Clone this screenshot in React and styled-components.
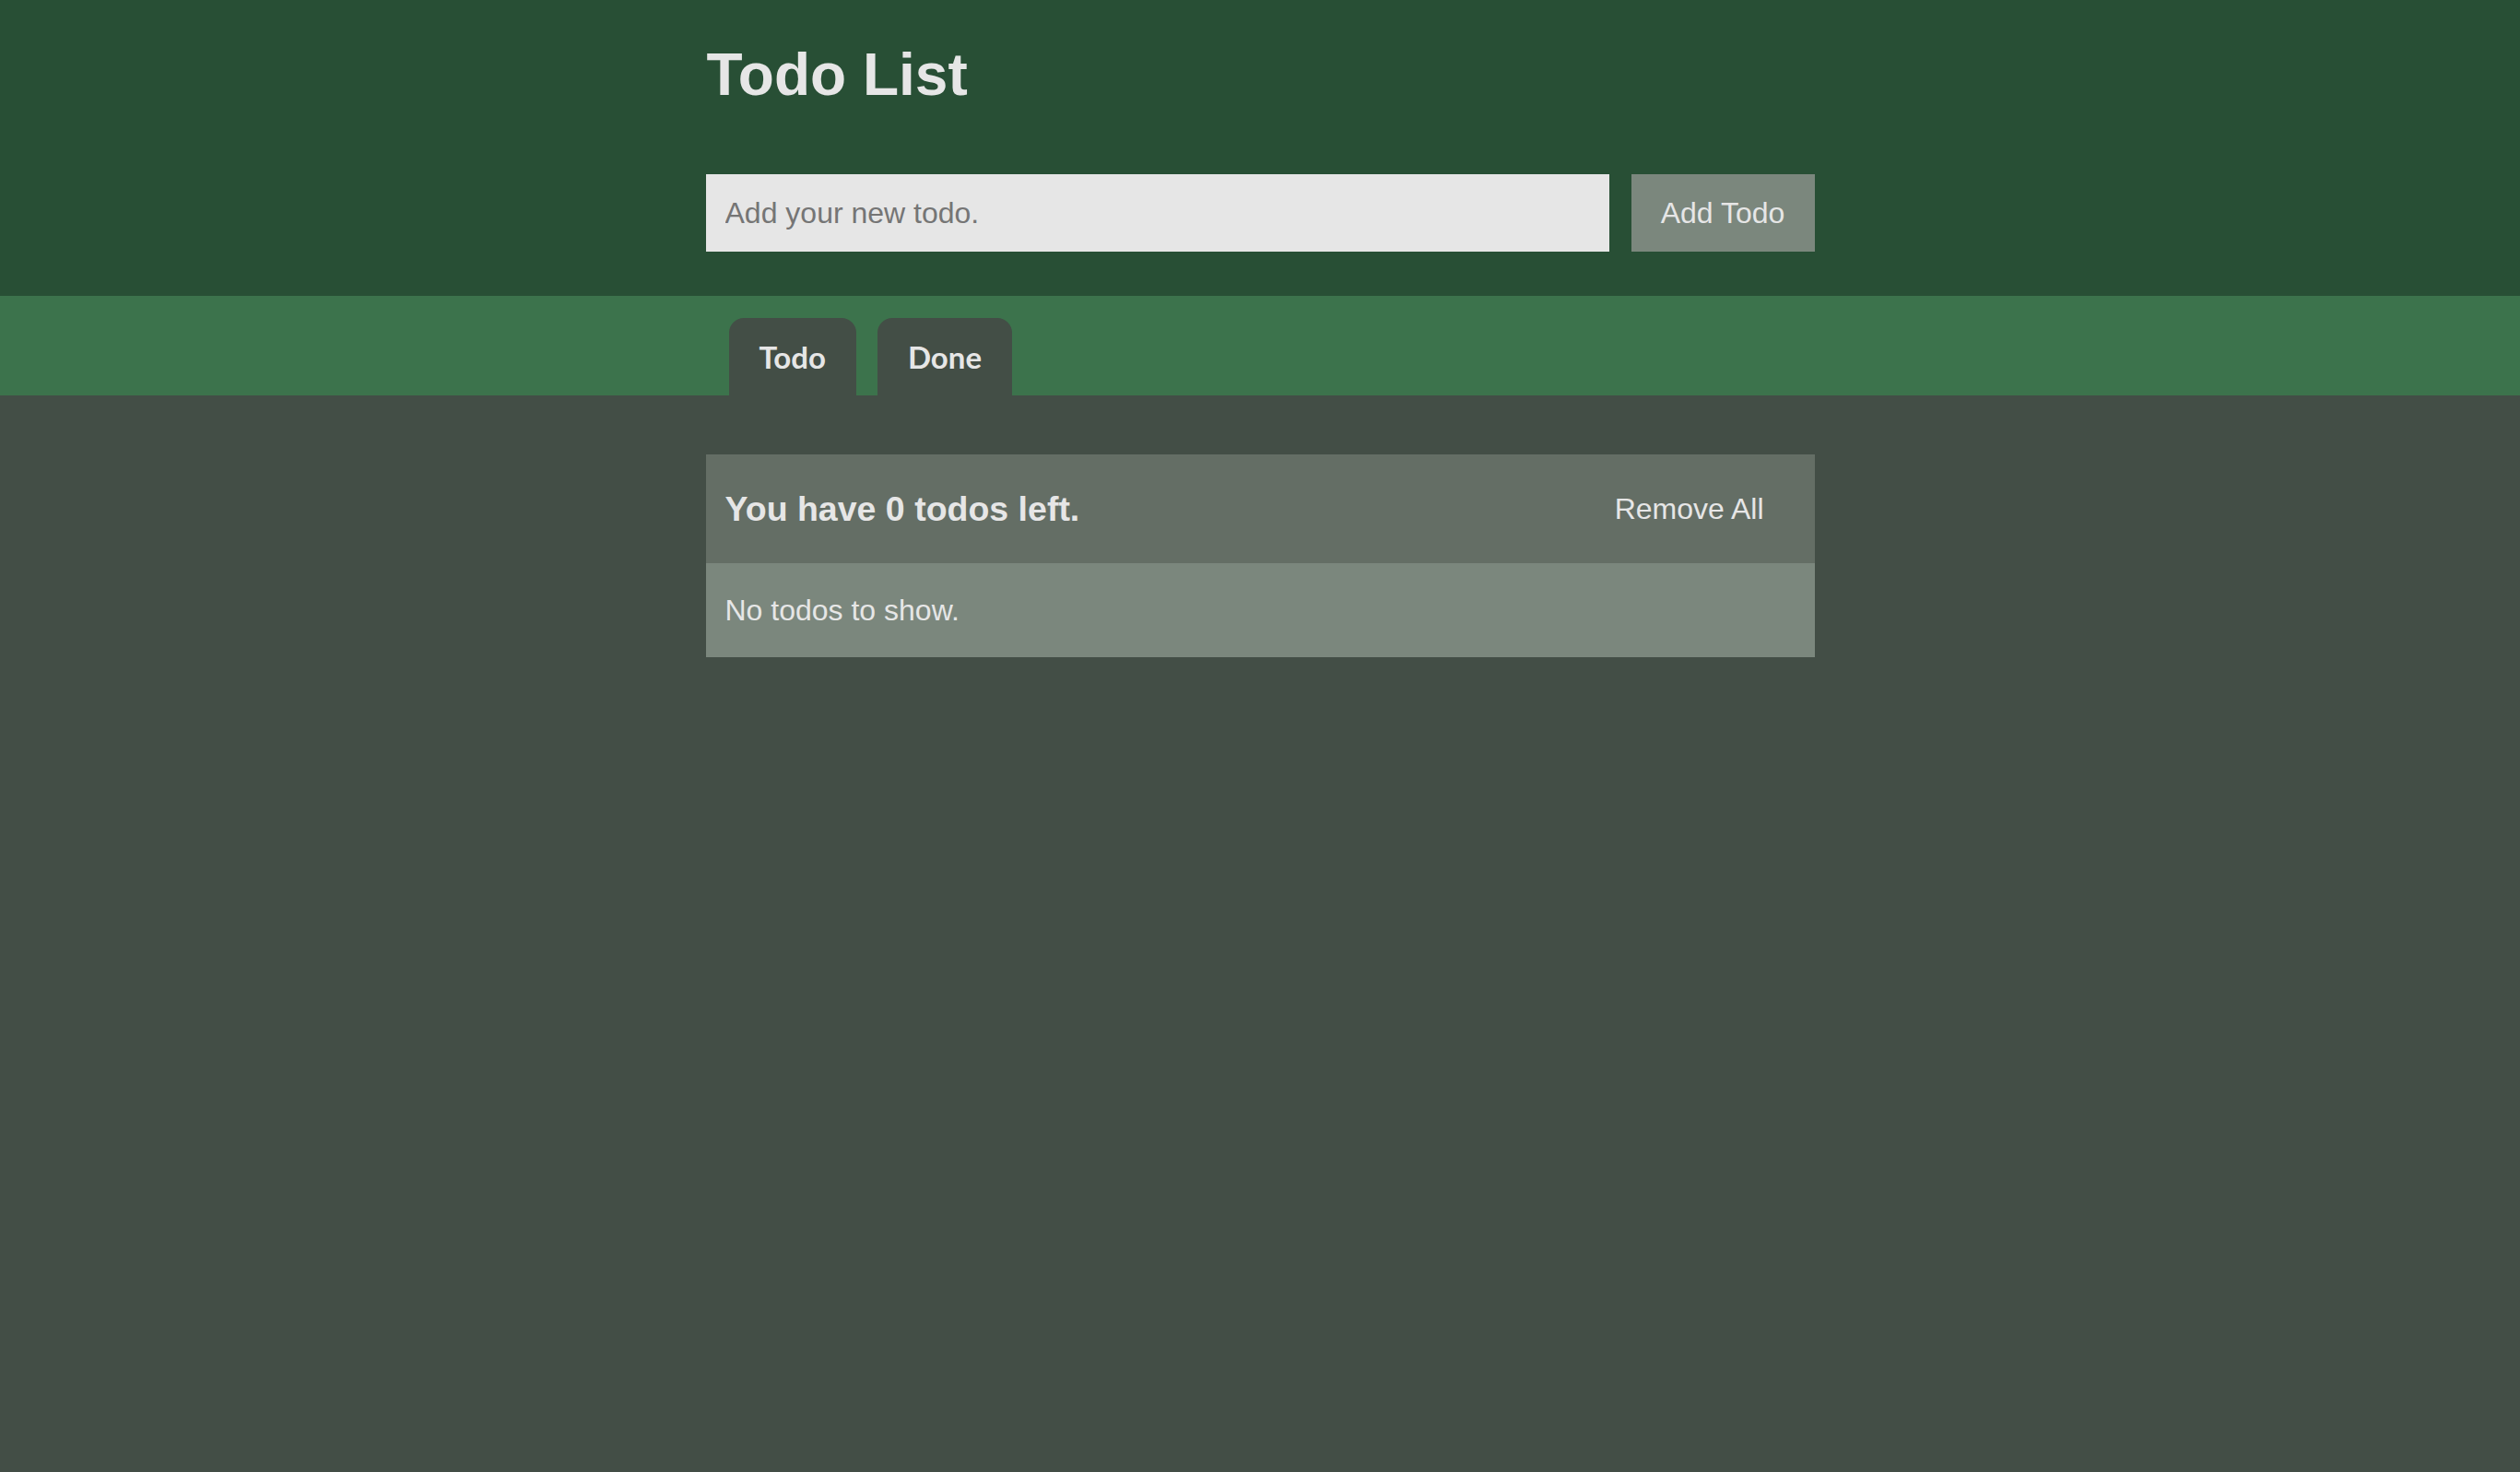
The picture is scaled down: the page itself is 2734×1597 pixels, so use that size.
import React, { useState } from "react";
import styled, { createGlobalStyle } from "styled-components";

const GlobalStyle = createGlobalStyle`
  html, body {
    margin: 0;
    padding: 0;
    background-color: #434e46;
    font-family: "Liberation Sans", Arial, sans-serif;
    color: #e6e6e6;
  }
  * {
    box-sizing: border-box;
  }
`;

const Page = styled.div`
  min-height: 100vh;
  background-color: #434e46;
`;

const Container = styled.div`
  width: 1203px;
  margin: 0 auto;
`;

const HeaderWrapper = styled.header`
  background-color: #284f35;
  padding: 44px 0 48px;
`;

const Title = styled.h1`
  margin: 0 0 71px 1px;
  font-size: 64px;
  line-height: 74px;
  font-weight: bold;
  color: #e6e6e6;
`;

const Form = styled.form`
  display: flex;
  gap: 24px;
  height: 84px;
`;

const TodoInput = styled.input`
  flex: 1;
  height: 100%;
  border: none;
  outline: none;
  background-color: #e6e6e6;
  padding: 0 21px;
  font-family: "Liberation Sans", Arial, sans-serif;
  font-size: 32px;
  color: #333;
  &::placeholder {
    color: #757575;
  }
`;

const AddButton = styled.button`
  width: 199px;
  height: 100%;
  border: none;
  background-color: #7b877d;
  color: #e6e6e6;
  font-family: "Liberation Sans", Arial, sans-serif;
  font-size: 32px;
  cursor: pointer;
`;

const TabBar = styled.nav`
  background-color: #3c734c;
  padding-top: 24px;
`;

const TabRow = styled.div`
  display: flex;
  gap: 23px;
  padding-left: 25px;
`;

const Tab = styled.button`
  height: 84px;
  padding: 0 33px;
  border: none;
  border-radius: 16px 16px 0 0;
  background-color: #434e46;
  color: #e6e6e6;
  font-family: Lato, "Open Sans", sans-serif;
  font-weight: 700;
  font-size: 33px;
  cursor: pointer;
`;

const Main = styled.main`
  padding-top: 64px;
`;

const Panel = styled.section`
  display: flex;
  flex-direction: column;
`;

const PanelHeader = styled.div`
  height: 118px;
  display: flex;
  justify-content: space-between;
  align-items: center;
  padding: 0 21px;
  background-color: #646e65;
`;

const Count = styled.h2`
  margin: 0;
  font-size: 37.5px;
  font-weight: bold;
  color: #e6e6e6;
`;

const RemoveButton = styled.button`
  border: none;
  background: transparent;
  color: #e6e6e6;
  font-family: "Liberation Sans", Arial, sans-serif;
  font-size: 32px;
  padding: 10px 34px;
  cursor: pointer;
`;

const PanelBody = styled.div`
  height: 102px;
  display: flex;
  align-items: center;
  padding: 0 21px;
  background-color: #7b877d;
  font-size: 32px;
  color: #e6e6e6;
`;

const App = () => {
  const [text, setText] = useState("");
  const todos = [];

  return (
    <>
      <GlobalStyle />
      <Page>
        <HeaderWrapper>
          <Container>
            <Title>Todo List</Title>
            <Form onSubmit={(e) => e.preventDefault()}>
              <TodoInput
                value={text}
                onChange={(e) => setText(e.target.value)}
                placeholder="Add your new todo."
              />
              <AddButton type="submit">Add Todo</AddButton>
            </Form>
          </Container>
        </HeaderWrapper>

        <TabBar>
          <Container>
            <TabRow>
              <Tab>Todo</Tab>
              <Tab>Done</Tab>
            </TabRow>
          </Container>
        </TabBar>

        <Main>
          <Container>
            <Panel>
              <PanelHeader>
                <Count>You have {todos.length} todos left.</Count>
                <RemoveButton>Remove All</RemoveButton>
              </PanelHeader>
              <PanelBody>No todos to show.</PanelBody>
            </Panel>
          </Container>
        </Main>
      </Page>
    </>
  );
};

export default App;
